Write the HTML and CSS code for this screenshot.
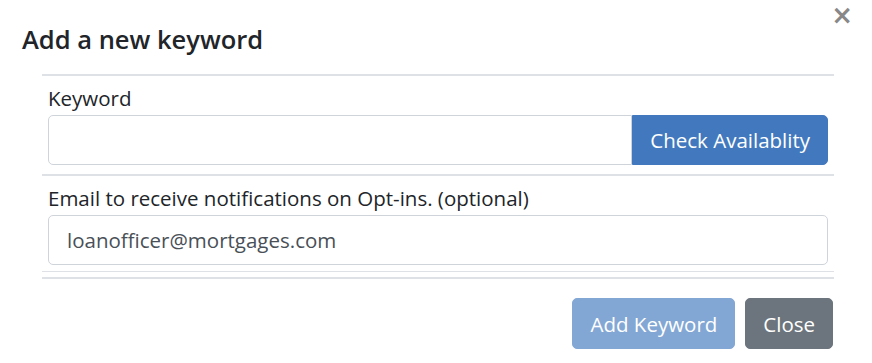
FILE: index.html
```html
<!DOCTYPE html>
<html lang="en">
<head>
  <meta charset="UTF-8">
  <title>Add a new keyword</title>
  <link rel="stylesheet" href="styles.css">
</head>
<body>
  <div class="modal">
    <div class="modal-header">
      <h2>Add a new keyword</h2>
      <button class="close-btn" type="button">&times;</button>
    </div>

    <div class="modal-body">
      <div class="field">
        <label for="keyword">Keyword</label>
        <div class="input-group">
          <input type="text" id="keyword">
          <button class="btn btn-primary" type="button">Check Availablity</button>
        </div>
      </div>

      <div class="field field-last">
        <label for="email">Email to receive notifications on Opt-ins. (optional)</label>
        <input type="text" id="email" value="loanofficer@mortgages.com">
      </div>
      <div class="divider"></div>
    </div>

    <div class="modal-footer">
      <button class="btn btn-primary" type="button" disabled>Add Keyword</button>
      <button class="btn btn-secondary" type="button">Close</button>
    </div>
  </div>
</body>
</html>
```

FILE: styles.css
```css
* {
  margin: 0;
  padding: 0;
  box-sizing: border-box;
}

body {
  font-family: "Open Sans", "Noto Sans", sans-serif;
  background: #fff;
  color: #212529;
  width: 872px;
  height: 363px;
  overflow: hidden;
}

.modal-header {
  display: flex;
  justify-content: space-between;
  align-items: flex-start;
  padding: 0 19px 0 22px;
  height: 74px;
}

.modal-header h2 {
  font-size: 25.5px;
  font-weight: 600;
  line-height: 32px;
  margin-top: 23px;
}

.close-btn {
  background: none;
  border: none;
  color: #888;
  font-family: "DejaVu Sans", sans-serif;
  font-size: 26px;
  font-weight: bold;
  line-height: 1;
  margin-top: 2px;
  cursor: pointer;
}

.modal-body {
  margin: 0 38px 0 42px;
  border-top: 2px solid #dee2e6;
}

.field {
  padding: 10px 6px 9px;
  border-bottom: 2px solid #dee2e6;
}

.field-last {
  border-bottom: 1px solid #dee2e6;
  padding-bottom: 6px;
}

.divider {
  margin-top: 5px;
  border-top: 2px solid #dee2e6;
}

label {
  display: block;
  font-size: 20.5px;
  line-height: 24px;
  margin-bottom: 5px;
}

input {
  display: block;
  width: 100%;
  height: 50px;
  padding: 0 18px;
  font-family: inherit;
  font-size: 20.5px;
  color: #495057;
  border: 1px solid #ced4da;
  border-radius: 5px;
  outline: none;
}

.input-group {
  display: flex;
}

.input-group input {
  flex: 1;
  border-radius: 5px 0 0 5px;
}

.btn {
  font-family: inherit;
  font-size: 20.5px;
  line-height: 24px;
  color: #fff;
  border: 1px solid transparent;
  border-radius: 5px;
  padding: 0 17px;
  height: 51px;
  cursor: pointer;
}

.btn-primary {
  background: #4279be;
  border-color: #4279be;
}

.btn-primary:disabled {
  opacity: 0.65;
  cursor: default;
}

.input-group .btn {
  height: 50px;
  border-radius: 0 5px 5px 0;
}

.btn-secondary {
  background: #6c757d;
  border-color: #6c757d;
}

.modal-footer {
  display: flex;
  justify-content: flex-end;
  gap: 10px;
  padding: 19px 39px 0 0;
}
```
